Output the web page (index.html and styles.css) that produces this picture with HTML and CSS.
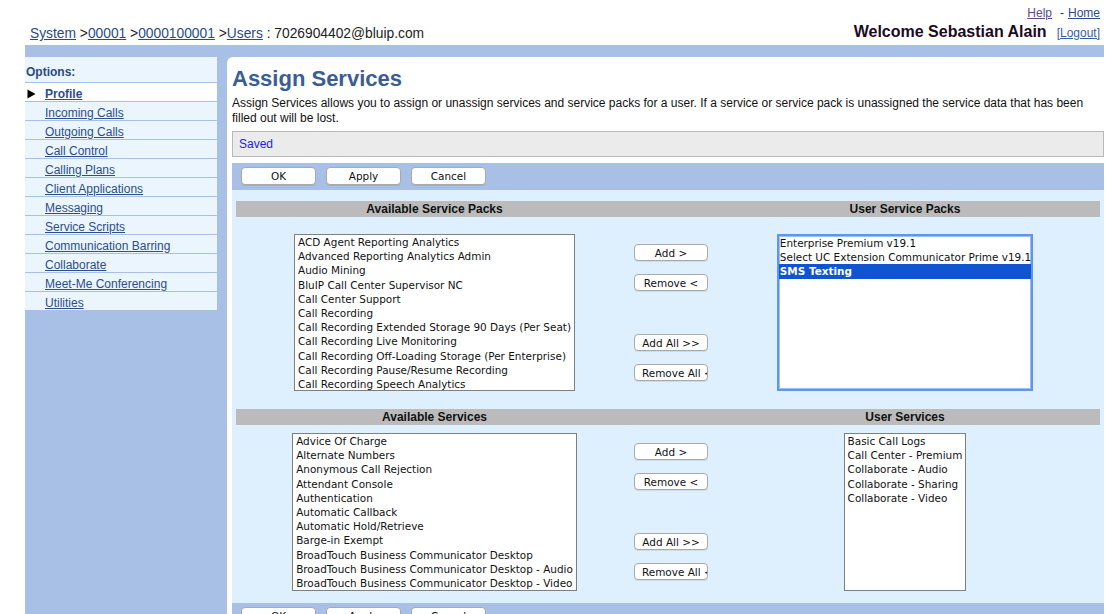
FILE: index.html
```html
<!DOCTYPE html>
<html lang="en">
<head>
<meta charset="utf-8">
<title>Assign Services</title>
<link rel="stylesheet" href="styles.css">
</head>
<body>
<div class="page">
  <header class="top">
    <div class="util"><a href="#" class="visited">Help</a><span class="dash">-</span><a href="#">Home</a></div>
    <div class="topline">
      <nav class="crumbs"><a href="#">System</a> &gt;<a href="#">00001</a> &gt;<a href="#">0000100001</a> &gt;<a href="#">Users</a> : 7026904402@bluip.com</nav>
      <div class="welcome"><strong>Welcome Sebastian Alain</strong><a href="#">[Logout]</a></div>
    </div>
  </header>

  <div class="frame">
    <aside class="side">
      <div class="side-panel">
        <div class="side-head">Options:</div>
        <ul class="side-list">
          <li class="current"><span class="mark"><svg width="9" height="10" viewBox="0 0 9 10"><path d="M0.5 0.5 L8.5 5 L0.5 9.5 Z" fill="#000"/></svg></span><a href="#">Profile</a></li>
          <li><span class="mark"></span><a href="#">Incoming Calls</a></li>
          <li><span class="mark"></span><a href="#">Outgoing Calls</a></li>
          <li><span class="mark"></span><a href="#">Call Control</a></li>
          <li><span class="mark"></span><a href="#">Calling Plans</a></li>
          <li><span class="mark"></span><a href="#">Client Applications</a></li>
          <li><span class="mark"></span><a href="#">Messaging</a></li>
          <li><span class="mark"></span><a href="#">Service Scripts</a></li>
          <li><span class="mark"></span><a href="#">Communication Barring</a></li>
          <li><span class="mark"></span><a href="#">Collaborate</a></li>
          <li><span class="mark"></span><a href="#">Meet-Me Conferencing</a></li>
          <li><span class="mark"></span><a href="#">Utilities</a></li>
        </ul>
      </div>
    </aside>

    <main class="main">
      <h1 class="title">Assign Services</h1>
      <p class="desc">Assign Services allows you to assign or unassign services and service packs for a user. If a service or service pack is unassigned the service data that has been filled out will be lost.</p>
      <div class="status">Saved</div>

      <div class="btnbar">
        <button class="btn wide">OK</button>
        <button class="btn wide">Apply</button>
        <button class="btn wide">Cancel</button>
      </div>

      <div class="content">
        <section class="pair first">
          <div class="pair-head"><span>Available Service Packs</span><span></span><span>User Service Packs</span></div>
          <div class="pair-body">
            <div class="cell">
              <div class="listbox" role="listbox">
                <div class="opt">ACD Agent Reporting Analytics</div>
                <div class="opt">Advanced Reporting Analytics Admin</div>
                <div class="opt">Audio Mining</div>
                <div class="opt">BluIP Call Center Supervisor NC</div>
                <div class="opt">Call Center Support</div>
                <div class="opt">Call Recording</div>
                <div class="opt">Call Recording Extended Storage 90 Days (Per Seat)</div>
                <div class="opt">Call Recording Live Monitoring</div>
                <div class="opt">Call Recording Off-Loading Storage (Per Enterprise)</div>
                <div class="opt">Call Recording Pause/Resume Recording</div>
                <div class="opt">Call Recording Speech Analytics</div>
              </div>
            </div>
            <div class="movers">
              <button class="btn mv">Add &gt;</button>
              <button class="btn mv">Remove &lt;</button>
              <button class="btn mv all">Add All &gt;&gt;</button>
              <button class="btn mv">Remove All &lt;&lt;</button>
            </div>
            <div class="cell">
              <div class="listbox focused" role="listbox">
                <div class="opt">Enterprise Premium v19.1</div>
                <div class="opt">Select UC Extension Communicator Prime v19.1</div>
                <div class="opt selected">SMS Texting</div>
              </div>
            </div>
          </div>
        </section>

        <section class="pair second">
          <div class="pair-head"><span>Available Services</span><span></span><span>User Services</span></div>
          <div class="pair-body">
            <div class="cell">
              <div class="listbox tall" role="listbox">
                <div class="opt">Advice Of Charge</div>
                <div class="opt">Alternate Numbers</div>
                <div class="opt">Anonymous Call Rejection</div>
                <div class="opt">Attendant Console</div>
                <div class="opt">Authentication</div>
                <div class="opt">Automatic Callback</div>
                <div class="opt">Automatic Hold/Retrieve</div>
                <div class="opt">Barge-in Exempt</div>
                <div class="opt">BroadTouch Business Communicator Desktop</div>
                <div class="opt">BroadTouch Business Communicator Desktop - Audio</div>
                <div class="opt">BroadTouch Business Communicator Desktop - Video</div>
              </div>
            </div>
            <div class="movers">
              <button class="btn mv">Add &gt;</button>
              <button class="btn mv">Remove &lt;</button>
              <button class="btn mv all">Add All &gt;&gt;</button>
              <button class="btn mv">Remove All &lt;&lt;</button>
            </div>
            <div class="cell">
              <div class="listbox tall" role="listbox">
                <div class="opt">Basic Call Logs</div>
                <div class="opt">Call Center - Premium</div>
                <div class="opt">Collaborate - Audio</div>
                <div class="opt">Collaborate - Sharing</div>
                <div class="opt">Collaborate - Video</div>
              </div>
            </div>
          </div>
        </section>
      </div>

      <div class="btnbar">
        <button class="btn wide">OK</button>
        <button class="btn wide">Apply</button>
        <button class="btn wide">Cancel</button>
      </div>
    </main>
  </div>
</div>
</body>
</html>
```

FILE: styles.css
```css
html, body {
  margin: 0;
  padding: 0;
  overflow: hidden;
  background: #fff;
}

body {
  font-family: "Liberation Sans", Arial, sans-serif;
  font-size: 12px;
  color: #000;
}

a {
  color: #2c4c8a;
  text-decoration: underline;
}

.page {
  margin-left: 25px;
  width: 1079px;
}

/* ---------- top header ---------- */
.top {
  height: 45px;
}

.util {
  display: flex;
  justify-content: flex-end;
  padding: 6px 4px 0 0;
  height: 14px;
  line-height: 14px;
  font-size: 12px;
}

.util a.visited {
  color: #5a4a98;
}

.util .dash {
  margin: 0 4px 0 8px;
  color: #333;
}

.topline {
  display: flex;
  justify-content: space-between;
  align-items: flex-start;
  height: 25px;
}

.crumbs {
  padding: 6px 0 0 5px;
  font-size: 13.8px;
  line-height: 16px;
  color: #222;
}

.crumbs a {
  color: #2a4a86;
}

.welcome {
  display: flex;
  align-items: baseline;
  gap: 10px;
  padding: 3px 4px 0 0;
  line-height: 18px;
}

.welcome strong {
  font-size: 16px;
  color: #1c0a1e;
}

.welcome a {
  font-size: 12px;
  color: #3a5ea2;
}

/* ---------- frame ---------- */
.frame {
  display: flex;
  background: #a8c0e5;
  padding-top: 12px;
  min-height: 620px;
}

.side {
  width: 202px;
  flex: none;
}

.side-panel {
  width: 192px;
  background: #eaf5fe;
}

.side-head {
  height: 25px;
  line-height: 31px;
  padding-left: 1px;
  font-weight: bold;
  font-size: 12px;
  color: #2b4b7e;
}

.side-list {
  list-style: none;
  margin: 0;
  padding: 0;
}

.side-list li {
  display: flex;
  align-items: center;
  height: 15px;
  padding-top: 3px;
  border-top: 1px solid #a8c0e5;
  font-size: 12px;
}

.side-list li.current {
  background: #fff;
}

.side-list li.current a {
  font-weight: bold;
}

.side-list .mark {
  width: 20px;
  flex: none;
  display: flex;
  align-items: center;
  padding-left: 2px;
  box-sizing: border-box;
}

.side-list .mark svg {
  display: block;
}

.side-list a {
  color: #2d4d8b;
}

/* ---------- main ---------- */
.main {
  flex: 1;
  background: #fff;
  border-top-left-radius: 6px;
  padding: 9px 0 20px 5px;
}

.title {
  margin: 0;
  font-size: 22px;
  line-height: 25px;
  font-weight: bold;
  color: #3a5c97;
}

.desc {
  margin: 5px 0 0;
  font-size: 12px;
  line-height: 15px;
  color: #111;
}

.status {
  margin-top: 5px;
  height: 24px;
  line-height: 24px;
  padding: 0 6px;
  background: #ebebeb;
  border: 1px solid #b9b9b9;
  color: #1c1cf4;
  font-size: 12px;
}

.btnbar {
  margin-top: 6px;
  display: flex;
  gap: 10px;
  height: 27px;
  box-sizing: border-box;
  padding: 4px 9px 0;
  background: #a8c0e5;
}

.content + .btnbar {
  margin-top: 0;
}

.btn {
  font-family: "DejaVu Sans", sans-serif;
  font-size: 10.45px;
  color: #111;
  background: #fff;
  border: 1px solid #a9a9a9;
  border-radius: 4px;
  box-shadow: 0 1px 0 rgba(0, 0, 0, 0.08);
  padding: 0 7px;
  margin: 0;
  display: flex;
  align-items: center;
  justify-content: safe center;
  overflow: hidden;
  white-space: nowrap;
  box-sizing: border-box;
}

.btn.wide {
  width: 75px;
  height: 18px;
}

/* ---------- assignment area ---------- */
.content {
  margin-top: 0;
  background: #deeffd;
  padding: 11px 4px 12px;
}

.pair-head,
.pair-body {
  display: grid;
  grid-template-columns: 397px 77px 390px;
}

.pair-head {
  background: #bbbbbb;
  height: 16px;
  line-height: 17px;
  font-weight: bold;
  font-size: 12px;
  color: #111;
  text-align: center;
}

.pair.first .pair-body {
  margin-top: 17px;
}

.pair.second {
  margin-top: 18px;
}

.pair.second .pair-body {
  margin-top: 8px;
}

.cell {
  display: flex;
  justify-content: center;
  align-items: flex-start;
}

.listbox {
  width: max-content;
  height: 157px;
  box-sizing: border-box;
  overflow: hidden;
  background: #fff;
  border: 1px solid #7f7f7f;
  padding: 0 2px;
  font-family: "DejaVu Sans", sans-serif;
  font-size: 10.45px;
  color: #111;
}

.listbox.tall {
  height: 158px;
}

.listbox.focused {
  border: 2px solid #5f96ec;
  box-shadow: inset 0 0 0 1px #9cbff4;
  padding: 0;
}

.opt {
  height: 14.2px;
  line-height: 14.2px;
  white-space: nowrap;
  padding: 0 1px;
}

.listbox.focused .opt {
  padding: 0 0 0 1px;
}

.opt.selected {
  background: #0f55d2;
  color: #fff;
  font-weight: bold;
}

.movers {
  display: flex;
  flex-direction: column;
  gap: 13px;
  padding: 10px 0 0 1px;
}

.btn.mv {
  width: 74px;
  height: 17px;
}

.btn.mv.all {
  margin-top: 30px;
}
```
